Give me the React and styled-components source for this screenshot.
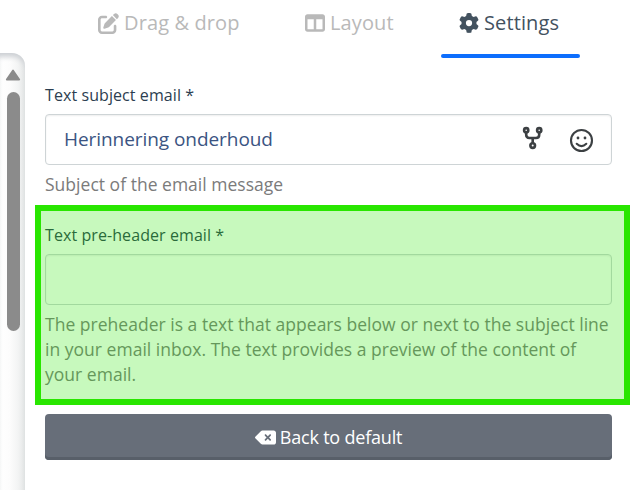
import React from 'react';
import styled, { createGlobalStyle } from 'styled-components';
import { FaPenToSquare, FaTableColumns, FaGear, FaDeleteLeft } from 'react-icons/fa6';

const GlobalStyle = createGlobalStyle`
  * { box-sizing: border-box; }
  body {
    margin: 0;
    background: #fff;
    font-family: "Open Sans", "Noto Sans", sans-serif;
    overflow: hidden;
  }
`;

const Page = styled.div`
  display: flex;
  width: 630px;
  height: 490px;
  overflow: hidden;
`;

const PreviewEdge = styled.aside`
  flex: none;
  width: 25px;
  height: 437px;
  margin-top: 53px;
  padding: 16px 5px 0 6px;
  display: flex;
  flex-direction: column;
  align-items: center;
  border-top-right-radius: 13px;
  background: linear-gradient(to right, #fff 0, #fcfcfc 10px, #f3f4f4 18px, #e3e5e5 25px);
  box-shadow: inset 0 6px 5px -2px #ced1d5;
`;

const ScrollArrow = styled.svg`
  flex: none;
  display: block;
  width: 16px;
  height: 12px;
`;

const ScrollThumb = styled.div`
  width: 13px;
  height: 239px;
  margin-top: 11px;
  border-radius: 7px;
  background: #8b8b8b;
`;

const Panel = styled.main`
  flex: 1;
  min-width: 0;
`;

const Tabs = styled.nav`
  display: flex;
  height: 58px;
  padding-left: 73px;
`;

const Tab = styled.div`
  flex: none;
  display: flex;
  align-items: flex-start;
  gap: 5px;
  width: ${(p) => p.$width}px;
  padding: 8px 0 0 ${(p) => p.$inset || 0}px;
  color: ${(p) => (p.$active ? '#43525f' : '#b9b9b9')};
  font-size: 20px;
  line-height: 30px;
  letter-spacing: 0.12px;
  white-space: nowrap;

  svg { flex: none; display: block; margin-top: 5px; }
`;

const ActiveTab = styled.div`
  display: flex;
  flex-direction: column;
  justify-content: space-between;
  height: 58px;
`;

const ActiveBar = styled.div`
  flex: none;
  height: 4px;
  border-radius: 2px;
  background: #0d6efd;
`;

const Form = styled.form`
  padding: 23px 18px 0 20px;
`;

const Field = styled.div`
  height: ${(p) => p.$height}px;
`;

const Label = styled.label`
  display: block;
  height: 33px;
  color: #2c3e50;
  font-size: 16px;
  line-height: 28px;
  letter-spacing: 0.08px;
`;

const InputBox = styled.div`
  display: flex;
  align-items: center;
  height: 51px;
  padding: 0 17px 0 18px;
  border: 1px solid #ced4d6;
  border-radius: 4px;
  box-shadow: inset 0 1px 2px rgba(0, 0, 0, 0.07);
  color: #3b5482;
  font-size: 19px;
`;

const Value = styled.span`
  flex: 1;
  margin-top: -2px;
  line-height: 28px;
  letter-spacing: -0.06px;
`;

const ForkIcon = styled.svg`
  display: block;
  width: 22px;
  height: 24px;
  margin-right: 25px;
  margin-top: -4px;
`;

const SmileIcon = styled.svg`
  display: block;
  width: 25px;
  height: 25px;
  margin-top: 1px;
`;

const Help = styled.p`
  margin: 7px -10px 0 0;
  color: #7b7b7b;
  font-size: 17.5px;
  line-height: 25px;
  letter-spacing: 0.02px;
  white-space: nowrap;
`;

const Highlight = styled.div`
  position: absolute;
  left: 35px;
  top: 205px;
  width: 595px;
  height: 200px;
  border: 6px solid #29e600;
  background: rgba(40, 230, 0, 0.26);
`;

const ResetButton = styled.button`
  display: flex;
  align-items: center;
  justify-content: center;
  gap: 4px;
  width: 100%;
  height: 46px;
  padding: 0;
  border: 0;
  border-radius: 4px;
  background: #676e79;
  box-shadow: inset 0 -3px 0 #585f69;
  color: #fff;
  font-family: inherit;
  font-size: 18px;
  line-height: 26px;
  letter-spacing: -0.2px;

  svg { width: 21px; height: 19px; }
`;

export default function App() {
  return (
    <Page>
      <GlobalStyle />
      <PreviewEdge>
        <ScrollArrow viewBox="0 0 16 12">
          <path d="M8 1.5 L14.2 10.6 H1.8Z" fill="#8b8b8b" stroke="#8b8b8b" strokeWidth="1.8" strokeLinejoin="round" />
        </ScrollArrow>
        <ScrollThumb />
      </PreviewEdge>
      <Panel>
        <Tabs>
          <Tab $width={207}><FaPenToSquare size={21} />Drag &amp; drop</Tab>
          <Tab $width={136}><FaTableColumns size={20} />Layout</Tab>
          <ActiveTab>
            <Tab $active $width={139} $inset={18}><FaGear size={20} />Settings</Tab>
            <ActiveBar />
          </ActiveTab>
        </Tabs>
        <Form>
          <Field $height={140}>
            <Label>Text subject email *</Label>
            <InputBox>
              <Value>Herinnering onderhoud</Value>
              <ForkIcon viewBox="0 0 22 24" fill="none" stroke="#3c4043" strokeWidth="2.6">
                <circle cx="4.2" cy="4.2" r="2.1" />
                <circle cx="17.2" cy="4.2" r="2.1" />
                <circle cx="10.7" cy="19.6" r="2.3" />
                <path d="M4.2 6.3v2.5q0 3.2 3.2 3.2h6.6q3.2 0 3.2-3.2V6.3M10.7 12v5.2" />
              </ForkIcon>
              <SmileIcon viewBox="0 0 25 25" fill="none" stroke="#3c4043" strokeWidth="2.1">
                <circle cx="12.5" cy="12.5" r="10.5" />
                <path d="M7.7 15.8q4.8 4.6 9.6 0" strokeLinecap="round" />
                <circle cx="9" cy="10" r="1.4" fill="#3c4043" stroke="none" />
                <circle cx="16" cy="10" r="1.4" fill="#3c4043" stroke="none" />
              </SmileIcon>
            </InputBox>
            <Help>Subject of the email message</Help>
          </Field>
          <Field $height={193}>
            <Label>Text pre-header email *</Label>
            <InputBox />
            <Help>
              The preheader is a text that appears below or next to the subject line<br />
              in your email inbox. The text provides a preview of the content of<br />
              your email.
            </Help>
          </Field>
          <ResetButton type="button"><FaDeleteLeft />Back to default</ResetButton>
        </Form>
      </Panel>
      <Highlight />
    </Page>
  );
}
